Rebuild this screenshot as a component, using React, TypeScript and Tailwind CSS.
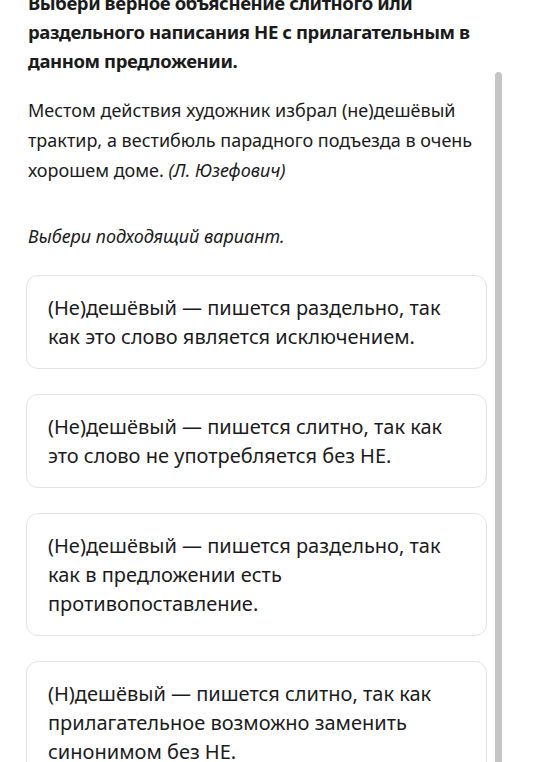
import React from 'react';

const options = [
  '(Не)дешёвый — пишется раздельно, так как это слово является исключением.',
  '(Не)дешёвый — пишется слитно, так как это слово не употребляется без НЕ.',
  '(Не)дешёвый — пишется раздельно, так как в предложении есть противопоставление.',
  '(Н)дешёвый — пишется слитно, так как прилагательное возможно заменить синонимом без НЕ.',
];

const App = () => {
  return (
    <div className="relative h-[762px] w-[534px] overflow-hidden bg-white text-[#1b1b1b] font-['Noto_Sans',sans-serif]">
      <div className="-mt-[12px] pl-[28px] pr-[47px]">
        {/* Task heading */}
        <h2 className="text-[18.5px] font-bold leading-[29px] tracking-[-0.4px]">
          Выбери верное объяснение слитного или раздельного написания НЕ с прилагательным в данном предложении.
        </h2>

        {/* Sentence */}
        <p className="mt-[20px] text-[18px] leading-[30px]">
          Местом действия художник избрал (не)дешёвый трактир, а вестибюль парадного подъезда в очень хорошем доме.{' '}
          <i>(Л. Юзефович)</i>
        </p>

        <p className="mt-[36px] text-[18px] italic leading-[30px]">Выбери подходящий вариант.</p>

        {/* Options */}
        <div className="-ml-[2px] mt-[24px] flex flex-col gap-[25px]">
          {options.map((text) => (
            <button
              key={text}
              className="rounded-[12px] border border-[#e4e4e4] bg-white py-[17px] pl-[21px] pr-[20px] text-left text-[20px] leading-[29px]"
            >
              {text}
            </button>
          ))}
        </div>
      </div>

      {/* Scrollbar */}
      <div className="absolute left-[495px] top-[72px] h-[700px] w-[7px] rounded-t-full bg-[#c4c4c4]" />
    </div>
  );
};

export default App;
